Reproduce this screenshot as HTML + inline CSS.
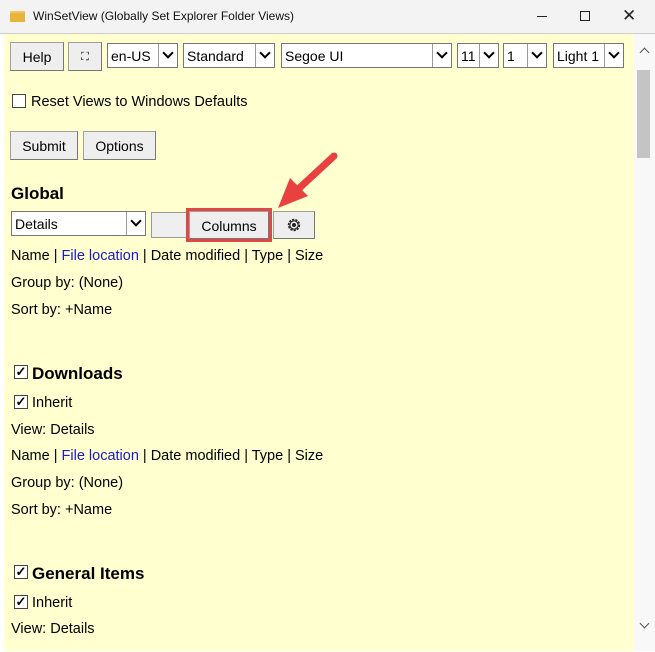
<!DOCTYPE html>
<html><head><meta charset="utf-8"><style>
*{box-sizing:border-box;margin:0;padding:0}
body{width:655px;height:652px;background:#fff;font-family:"Liberation Sans",sans-serif;position:relative;overflow:hidden;color:#000}
.title{position:absolute;left:0;top:0;width:655px;height:34px;background:#f3f3f3;border-bottom:1px solid #ccc}
.title .t{position:absolute;left:33px;top:9px;font-size:12px;color:#111}
.content{position:absolute;left:4px;top:34px;width:630px;height:617px;background:#ffffcf}
.sb{position:absolute;left:634px;top:34px;width:21px;height:617px;background:#f8f8f8}
.a{position:absolute}
.btn{position:absolute;background:#eeeeee;border:1px solid #a0a0a0;border-right-color:#777;border-bottom-color:#777;font-size:14px;text-align:center;line-height:28px;height:29px}
.sel{position:absolute;height:25px;border:1px solid #777;background:#fff;font-size:14px;line-height:24px;padding-left:3px}
.sel:after{content:"";position:absolute;right:0;top:0;width:18px;height:23px;border-left:1px solid #999;background:#fff}
.sel i{position:absolute;right:5px;top:5px;width:8px;height:8px;border-right:2px solid #000;border-bottom:2px solid #000;transform:rotate(45deg);z-index:2}
.tx{position:absolute;font-size:14.5px;white-space:nowrap}
.h{position:absolute;font-size:17px;font-weight:bold}
.cb{position:absolute;width:14px;height:14px;border:1px solid #444;background:#fff;font-size:13px;font-weight:bold;line-height:12px;text-align:center}
.blue{color:#1a1acc}
</style></head><body>
<div class="title">
<div class="a" style="left:10px;top:11px;width:15px;height:11px;background:#e8b43a;border-top:2px solid #f0c860"></div>
<div class="t">WinSetView (Globally Set Explorer Folder Views)</div>
<div class="a" style="left:537px;top:16px;width:10px;height:1px;background:#222"></div>
<div class="a" style="left:580px;top:11px;width:10px;height:10px;border:1px solid #222"></div>
<div class="a" style="left:622px;top:6px;font-size:17px;color:#222">✕</div>
</div>
<div class="content"></div>
<div class="sb">
<div class="a" style="left:7px;top:15px;width:7px;height:7px;border-left:1.5px solid #555;border-top:1.5px solid #555;transform:rotate(45deg)"></div>
<div class="a" style="left:3px;top:36px;width:13px;height:88px;background:#c4c4c4"></div>
<div class="a" style="left:7px;top:586px;width:7px;height:7px;border-right:1.5px solid #555;border-bottom:1.5px solid #555;transform:rotate(45deg)"></div>
</div>

<div class="btn" style="left:10px;top:42px;width:54px">Help</div>
<div class="btn" style="left:68px;top:42px;width:34px;font-size:11px">⛶</div>
<div class="sel" style="left:107px;top:43px;width:71px">en-US<i></i></div>
<div class="sel" style="left:183px;top:43px;width:92px">Standard<i></i></div>
<div class="sel" style="left:281px;top:43px;width:171px">Segoe UI<i></i></div>
<div class="sel" style="left:457px;top:43px;width:42px">11<i></i></div>
<div class="sel" style="left:503px;top:43px;width:44px">1<i></i></div>
<div class="sel" style="left:553px;top:43px;width:71px">Light 1<i></i></div>

<div class="cb" style="left:12px;top:94px"></div>
<div class="tx" style="left:31px;top:94px">Reset Views to Windows Defaults</div>

<div class="btn" style="left:10px;top:131px;width:68px">Submit</div>
<div class="btn" style="left:83px;top:131px;width:73px">Options</div>

<div class="h" style="left:11px;top:184px">Global</div>
<div class="sel" style="left:11px;top:211px;width:135px">Details<i></i></div>
<div class="a" style="left:151px;top:212px;width:40px;height:26px;background:#efefef;border:1px solid #999"></div>
<div class="btn" style="left:189px;top:211px;width:80px;height:28px">Columns</div>
<div class="a" style="left:186px;top:208px;width:86px;height:34px;border:3px solid #e04848"></div>
<div class="btn" style="left:273px;top:211px;width:42px;height:28px"><svg width="18" height="18" style="margin-top:4px" viewBox="0 0 18 18"><circle cx="9" cy="9" r="5.5" fill="none" stroke="#222" stroke-width="1.4" stroke-dasharray="2.2 1.2"/><circle cx="9" cy="9" r="4.2" fill="none" stroke="#222" stroke-width="1.2"/><circle cx="9" cy="9" r="2" fill="#222"/></svg></div>
<svg class="a" style="left:270px;top:148px" width="80" height="70"><line x1="64" y1="8" x2="24" y2="45" stroke="#e94040" stroke-width="7" stroke-linecap="round"/><polygon points="8,60 20,30 38,48" fill="#e94040"/></svg>

<div class="tx" style="left:11px;top:248px">Name | <span class="blue">File location</span> | Date modified | Type | Size</div>
<div class="tx" style="left:11px;top:275px">Group by: (None)</div>
<div class="tx" style="left:11px;top:302px">Sort by: +Name</div>

<div class="cb" style="left:14px;top:365px">✓</div>
<div class="h" style="left:32px;top:364px">Downloads</div>
<div class="cb" style="left:14px;top:395px">✓</div>
<div class="tx" style="left:32px;top:395px">Inherit</div>
<div class="tx" style="left:11px;top:422px">View: Details</div>
<div class="tx" style="left:11px;top:448px">Name | <span class="blue">File location</span> | Date modified | Type | Size</div>
<div class="tx" style="left:11px;top:475px">Group by: (None)</div>
<div class="tx" style="left:11px;top:502px">Sort by: +Name</div>

<div class="cb" style="left:14px;top:565px">✓</div>
<div class="h" style="left:32px;top:564px">General Items</div>
<div class="cb" style="left:14px;top:595px">✓</div>
<div class="tx" style="left:32px;top:595px">Inherit</div>
<div class="tx" style="left:11px;top:621px">View: Details</div>
</body></html>
